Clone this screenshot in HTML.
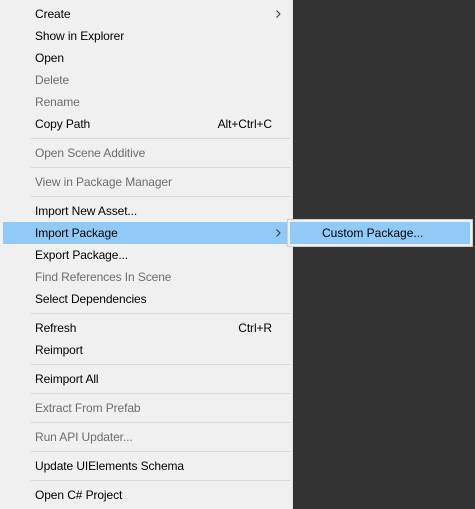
<!DOCTYPE html><html><head><style>
body{margin:0;width:475px;height:509px;background:#333;position:relative;overflow:hidden;font-family:"Liberation Sans",sans-serif;font-size:12px;}
#m{position:absolute;left:0;top:0;width:292px;height:509px;background:#f0f0f0;border-right:1px solid #e0e0e0;}
.i{position:absolute;left:3px;width:287px;height:22px;line-height:22px;color:#000;letter-spacing:-0.1px;}
.i span{position:absolute;left:32px;}
.d{color:#6d6d6d;}
.h{background:#91c9f7;}
.k{position:absolute;right:18px;font-weight:normal;}
.a{position:absolute;left:273px;top:7px;}
.s{position:absolute;left:31px;width:259px;height:1px;background:#d7d7d7;}
#sub{position:absolute;left:287px;top:219px;width:184px;height:26px;background:#f0f0f0;border:1px solid #cfcfcf;}
#sub div{position:absolute;left:2px;top:2px;right:2px;bottom:2px;background:#91c9f7;line-height:22px;padding-left:32px;}
</style></head><body>
<div id="m">
<div class="i" style="top:3px"><span>Create</span><svg class="a" width="5" height="8"><path d="M0.5 0.5L4 4L0.5 7.5" fill="none" stroke="#333" stroke-width="1"/></svg></div>
<div class="i" style="top:25px"><span>Show in Explorer</span></div>
<div class="i" style="top:47px"><span>Open</span></div>
<div class="i d" style="top:69px"><span>Delete</span></div>
<div class="i d" style="top:91px"><span>Rename</span></div>
<div class="i" style="top:113px"><span>Copy Path</span><b class="k">Alt+Ctrl+C</b></div>
<div class="s" style="top:138px"></div>
<div class="i d" style="top:142px"><span>Open Scene Additive</span></div>
<div class="s" style="top:167px"></div>
<div class="i d" style="top:171px"><span>View in Package Manager</span></div>
<div class="s" style="top:196px"></div>
<div class="i" style="top:200px"><span>Import New Asset...</span></div>
<div class="i h" style="top:222px"><span>Import Package</span><svg class="a" width="5" height="8"><path d="M0.5 0.5L4 4L0.5 7.5" fill="none" stroke="#333" stroke-width="1"/></svg></div>
<div class="i" style="top:244px"><span>Export Package...</span></div>
<div class="i d" style="top:266px"><span>Find References In Scene</span></div>
<div class="i" style="top:288px"><span>Select Dependencies</span></div>
<div class="s" style="top:313px"></div>
<div class="i" style="top:317px"><span>Refresh</span><b class="k">Ctrl+R</b></div>
<div class="i" style="top:339px"><span>Reimport</span></div>
<div class="s" style="top:364px"></div>
<div class="i" style="top:368px"><span>Reimport All</span></div>
<div class="s" style="top:393px"></div>
<div class="i d" style="top:397px"><span>Extract From Prefab</span></div>
<div class="s" style="top:422px"></div>
<div class="i d" style="top:426px"><span>Run API Updater...</span></div>
<div class="s" style="top:451px"></div>
<div class="i" style="top:455px"><span>Update UIElements Schema</span></div>
<div class="s" style="top:480px"></div>
<div class="i" style="top:484px"><span>Open C# Project</span></div>
</div>
<div id="sub"><div>Custom Package...</div></div>
</body></html>
